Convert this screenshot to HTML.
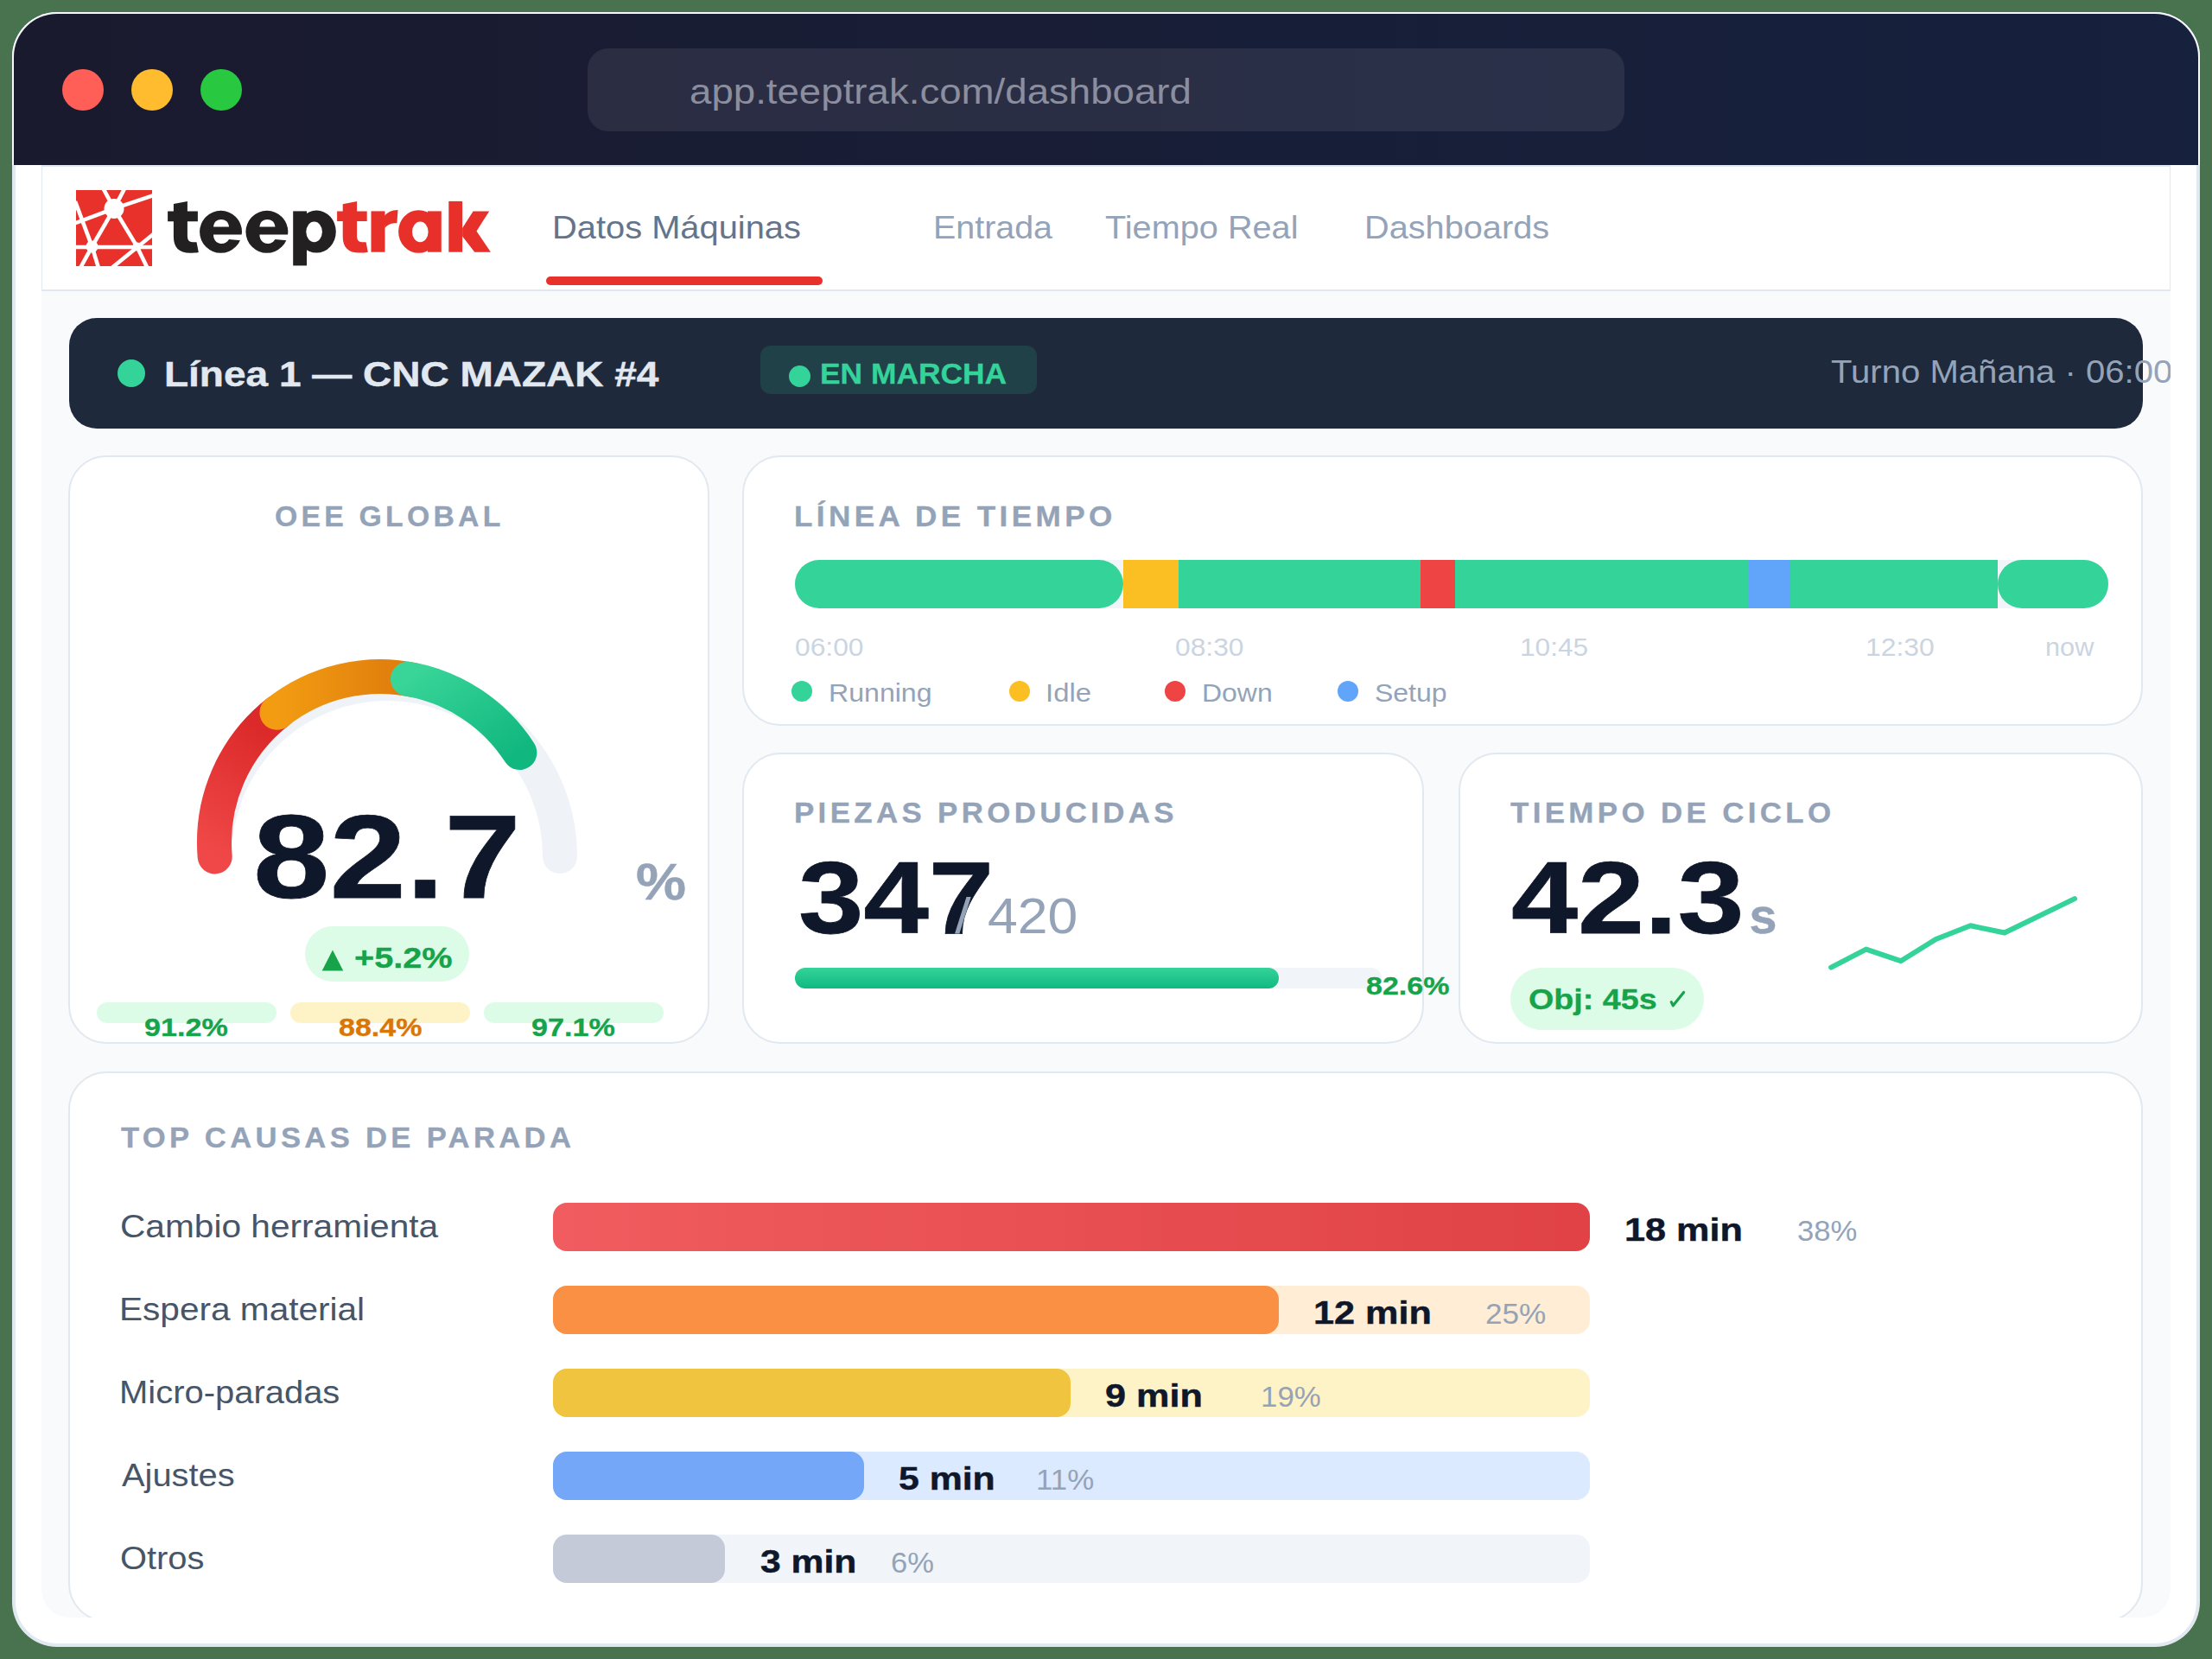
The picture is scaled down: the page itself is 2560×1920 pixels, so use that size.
<!DOCTYPE html>
<html><head><meta charset="utf-8"><style>
html,body{margin:0;padding:0;}
body{width:2560px;height:1920px;background:#48734e;position:relative;overflow:hidden;font-family:"Liberation Sans",sans-serif;}
.r{position:absolute;}
.t{position:absolute;white-space:nowrap;transform-origin:0 0;}
</style>
<script>(function(){function f(){var w=window.innerWidth||2560;var z=w/2560;if(Math.abs(z-1)>0.01){document.documentElement.style.zoom=z;}}f();window.addEventListener('resize',f);})();</script>
</head><body>
<div class="r" style="left:14px;top:14px;width:2532px;height:1892px;border-radius:52px;background:#e2e8f0;overflow:hidden">
<div class="r" style="left:0;top:0;width:2532px;height:177px;background:#f5f7fb"></div>
<div class="r" style="left:2px;top:2px;width:2528px;height:175px;border-radius:50px 50px 0 0;background:linear-gradient(90deg,#1a1a2e,#16213e)"></div>
<div class="r" style="left:4px;top:177px;width:2524px;height:1711px;border-radius:0 0 48px 48px;background:#fff"></div>
</div>
<div class="r" style="left:71.8px;top:79.6px;width:48.0px;height:48.0px;background:#ff5f57;border-radius:24px;"></div>
<div class="r" style="left:151.6px;top:79.6px;width:48.0px;height:48.0px;background:#febc2e;border-radius:24px;"></div>
<div class="r" style="left:231.5px;top:79.6px;width:48.0px;height:48.0px;background:#28c840;border-radius:24px;"></div>
<div class="r" style="left:680.0px;top:56.0px;width:1200.0px;height:96.0px;background:rgba(255,255,255,0.08);border-radius:24px;"></div>
<div class="t" style="left:798.1px;top:86.3px;font-size:41.0px;line-height:41.0px;letter-spacing:0.00px;transform:scaleX(1.1130);color:#8b8e9e;font-weight:400;">app.teeptrak.com/dashboard</div>
<div class="r" style="left:48px;top:191px;width:2464px;height:1681px;background:#f8fafc;border-radius:0 0 32px 32px;overflow:hidden">
<div id="inner" style="position:absolute;left:-48px;top:-191px;width:2560px;height:1920px">
<div class="r" style="left:48.0px;top:191.0px;width:2464.0px;height:146.0px;background:#fff;border-radius:0px;border:1px solid #e2e8f0;border-top-width:2px;border-bottom-width:2px;box-sizing:border-box"></div>
<svg class="r" style="left:88px;top:220px" width="88" height="88" viewBox="0 0 88 88">
<rect width="88" height="88" fill="#e8312a"/>
<g stroke="#fff" stroke-width="4.6" stroke-linecap="butt" fill="none">
<line x1="31.4" y1="-2" x2="44" y2="21.4"/>
<line x1="56.3" y1="-2" x2="44" y2="21.4"/>
<line x1="44" y1="21.4" x2="90" y2="6"/>
<line x1="44" y1="21.4" x2="-2" y2="38.6"/>
<line x1="-1" y1="13" x2="18.5" y2="65.4"/>
<line x1="44" y1="21.4" x2="18.5" y2="65.4"/>
<line x1="44" y1="21.4" x2="70.6" y2="65.4"/>
<line x1="-2" y1="66" x2="90" y2="66"/>
<line x1="18.5" y1="65.4" x2="5" y2="90"/>
<line x1="18.5" y1="65.4" x2="26" y2="90"/>
<line x1="42" y1="89.5" x2="90" y2="50.5"/>
<line x1="70.6" y1="65.4" x2="82.5" y2="90"/>
</g>
<circle cx="44" cy="21.4" r="11.5" fill="#fff"/>
<circle cx="18.5" cy="65.4" r="7" fill="#fff"/>
<circle cx="70.6" cy="65.4" r="5" fill="#fff"/>
</svg>
<svg class="r" style="left:0;top:0" width="600" height="330" viewBox="0 0 600 330">
<g fill="#222021">
<path d="M200.9,235.9 L216.9,233 L216.9,244.4 L228.9,244.4 L228.9,256.2 L216.9,256.2 L216.9,273 C216.9,278 219,280.2 223,280.2 L227.5,280.2 L229.8,292 C227,292.6 223.5,292.8 220,292.8 C207,292.8 200.9,286 200.9,274 L200.9,256.2 L194.1,256.2 L194.1,244.4 L200.9,244.4 Z"/>
<ellipse cx="255.55" cy="268.3" rx="24.45" ry="24.5"/>
<ellipse cx="308.9" cy="268.3" rx="24.45" ry="24.5"/>
<rect x="339.2" y="244.4" width="15.8" height="63"/>
<ellipse cx="366.3" cy="268.1" rx="22.5" ry="24.5"/>
</g>
<g fill="#fff">
<path d="M247,262.5 C247.5,257 251,253.9 256,253.9 C261,253.9 264.5,257 265,262.5 Z"/>
<path d="M247,271.6 L281.5,271.6 L281.5,278.6 L265,277 C263,280.5 260,282 256.5,282 C251,282 247,278 247,271.6 Z"/>
<path d="M300.4,262.5 C300.9,257 304.4,253.9 309.4,253.9 C314.4,253.9 317.9,257 318.4,262.5 Z"/>
<path d="M300.4,271.6 L334.9,271.6 L334.9,278.6 L318.4,277 C316.4,280.5 313.4,282 309.9,282 C304.4,282 300.4,278 300.4,271.6 Z"/>
<ellipse cx="363.6" cy="268.3" rx="9.3" ry="11.9"/>
</g>
<g fill="#e8302a">
<path d="M396.7,236.3 L413.1,232.9 L413.1,244.4 L424.7,244.4 L424.7,256.1 L413.1,256.1 L413.1,273 C413.1,278 415.2,280.2 419,280.2 L423.6,280.2 L425.8,291.8 C423,292.4 419.5,292.6 416,292.6 C403,292.6 396.7,286 396.7,274 L396.7,256.1 L390.1,256.1 L390.1,244.4 L396.7,244.4 Z"/>
<rect x="429.5" y="244.4" width="16" height="47.3"/>
<path d="M445.5,264 C448.5,259.5 453,258.3 459.4,258.3 L460.5,243.1 C453,243.1 448,246 444,251 Z"/>
<ellipse cx="484.5" cy="268" rx="23.4" ry="24.8"/>
<rect x="495" y="244.4" width="15.8" height="47.3"/>
<rect x="519.3" y="232.9" width="15.8" height="58.8"/>
<path d="M535.1,264 L547.6,244.4 L566.2,244.4 L551.5,267.4 L567.9,291.7 L549.3,291.7 L535.1,273.6 Z"/>
</g>
<ellipse cx="486.3" cy="268.4" rx="9.3" ry="11.8" fill="#fff"/>
</svg>
<div class="t" style="left:639.3px;top:244.7px;font-size:37.0px;line-height:37.0px;letter-spacing:0.00px;transform:scaleX(1.0770);color:#64748b;font-weight:400;">Datos Máquinas</div>
<div class="t" style="left:1080.1px;top:244.7px;font-size:37.0px;line-height:37.0px;letter-spacing:0.00px;transform:scaleX(1.0652);color:#94a3b8;font-weight:400;">Entrada</div>
<div class="t" style="left:1279.1px;top:244.7px;font-size:37.0px;line-height:37.0px;letter-spacing:0.00px;transform:scaleX(1.0726);color:#94a3b8;font-weight:400;">Tiempo Real</div>
<div class="t" style="left:1579.0px;top:244.7px;font-size:37.0px;line-height:37.0px;letter-spacing:0.00px;transform:scaleX(1.0730);color:#94a3b8;font-weight:400;">Dashboards</div>
<div class="r" style="left:631.6px;top:319.6px;width:320.4px;height:10.1px;background:#e8312a;border-radius:5px;"></div>
<div class="r" style="left:80.0px;top:368.0px;width:2400.0px;height:128.0px;background:#1e293b;border-radius:32px;"></div>
<div class="r" style="left:135.6px;top:416.0px;width:32.0px;height:32.0px;background:#34d399;border-radius:16px;"></div>
<div class="t" style="left:189.6px;top:413.3px;font-size:41.0px;line-height:41.0px;letter-spacing:0.00px;transform:scaleX(1.1217);color:#e2e8f0;font-weight:700;-webkit-text-stroke:0.45px #e2e8f0;">Línea 1 — CNC MAZAK #4</div>
<div class="r" style="left:880.0px;top:400.0px;width:320.0px;height:56.0px;background:rgba(52,211,153,0.15);border-radius:12px;"></div>
<div class="r" style="left:912.5px;top:423.2px;width:25.0px;height:25.0px;background:#34d399;border-radius:12.5px;"></div>
<div class="t" style="left:948.6px;top:416.4px;font-size:33.0px;line-height:33.0px;letter-spacing:0.00px;transform:scaleX(1.0718);color:#34d399;font-weight:700;-webkit-text-stroke:0.30px #34d399;">EN MARCHA</div>
<div class="t" style="left:2119.2px;top:412.2px;font-size:37.0px;line-height:37.0px;letter-spacing:0.00px;transform:scaleX(1.0838);color:#94a3b8;font-weight:400;">Turno Mañana · 06:00</div>
<div class="r" style="left:79.0px;top:527.0px;width:742.0px;height:681.0px;background:#fff;border-radius:44px;border:2px solid #e2e8f0;box-sizing:border-box"></div>
<div class="r" style="left:859.0px;top:527.0px;width:1621.0px;height:313.0px;background:#fff;border-radius:44px;border:2px solid #e2e8f0;box-sizing:border-box"></div>
<div class="r" style="left:859.0px;top:871.0px;width:789.0px;height:337.0px;background:#fff;border-radius:44px;border:2px solid #e2e8f0;box-sizing:border-box"></div>
<div class="r" style="left:1688.0px;top:871.0px;width:792.0px;height:337.0px;background:#fff;border-radius:44px;border:2px solid #e2e8f0;box-sizing:border-box"></div>
<div class="r" style="left:79.0px;top:1240.0px;width:2401.0px;height:637.0px;background:#fff;border-radius:44px;border:2px solid #e2e8f0;box-sizing:border-box"></div>
<div class="t" style="left:317.7px;top:580.6px;font-size:33.0px;line-height:33.0px;letter-spacing:4.12px;transform:scaleX(1.0237);color:#94a3b8;font-weight:700;-webkit-text-stroke:0.30px #94a3b8;">OEE GLOBAL</div>
<div class="t" style="left:918.6px;top:581.1px;font-size:33.0px;line-height:33.0px;letter-spacing:4.12px;transform:scaleX(1.0640);color:#94a3b8;font-weight:700;-webkit-text-stroke:0.30px #94a3b8;">LÍNEA DE TIEMPO</div>
<div class="t" style="left:918.9px;top:924.0px;font-size:33.0px;line-height:33.0px;letter-spacing:4.12px;transform:scaleX(1.0564);color:#94a3b8;font-weight:700;-webkit-text-stroke:0.30px #94a3b8;">PIEZAS PRODUCIDAS</div>
<div class="t" style="left:1747.7px;top:924.0px;font-size:33.0px;line-height:33.0px;letter-spacing:4.12px;transform:scaleX(1.0573);color:#94a3b8;font-weight:700;-webkit-text-stroke:0.30px #94a3b8;">TIEMPO DE CICLO</div>
<div class="t" style="left:140.2px;top:1300.3px;font-size:33.0px;line-height:33.0px;letter-spacing:4.12px;transform:scaleX(1.0496);color:#94a3b8;font-weight:700;-webkit-text-stroke:0.30px #94a3b8;">TOP CAUSAS DE PARADA</div>
<svg class="r" style="left:0;top:0" width="2560" height="1920" viewBox="0 0 2560 1920">
<defs><linearGradient id="gr" x1="0" y1="1" x2="0.3" y2="0"><stop offset="0" stop-color="#f04848"/><stop offset="1" stop-color="#dc2a2a"/></linearGradient><linearGradient id="go" x1="0" y1="0" x2="1" y2="0"><stop offset="0" stop-color="#f39c12"/><stop offset="1" stop-color="#dd7a0c"/></linearGradient><linearGradient id="gg" x1="0" y1="0" x2="1" y2="1"><stop offset="0" stop-color="#38d498"/><stop offset="1" stop-color="#10b77f"/></linearGradient></defs>
<path d="M248.00,991.00 A200,200 0 0 1 648.00,991.00" stroke="#eff3f8" stroke-width="40" fill="none" stroke-linecap="round"/>
<path d="M248.70,991.40 A192,192 0 0 1 321.79,823.70" stroke="url(#gr)" stroke-width="40" fill="none" stroke-linecap="round"/>
<path d="M320.48,824.74 A192,192 0 0 1 479.92,787.20" stroke="url(#go)" stroke-width="40" fill="none" stroke-linecap="round"/>
<path d="M472.02,785.69 A192,192 0 0 1 601.39,870.99" stroke="url(#gg)" stroke-width="40" fill="none" stroke-linecap="round"/>
<polyline points="2119.2,1119.7 2159.7,1098.6 2199.8,1112.2 2240.4,1087 2280.5,1071.3 2319.9,1079.5 2401,1040.1" stroke="#34d399" stroke-width="6" fill="none" stroke-linecap="round" stroke-linejoin="round"/>
</svg>
<div class="t" style="left:293.3px;top:924.0px;font-size:136.5px;line-height:136.5px;letter-spacing:0.00px;transform:scaleX(1.1663);color:#0f172a;font-weight:700;-webkit-text-stroke:0.75px #0f172a;">82.7</div>
<div class="t" style="left:736.1px;top:990.9px;font-size:59.5px;line-height:59.5px;letter-spacing:0.00px;transform:scaleX(1.0955);color:#94a3b8;font-weight:700;-webkit-text-stroke:0.45px #94a3b8;">%</div>
<div class="r" style="left:352.7px;top:1071.7px;width:190.7px;height:64.6px;background:#dcfce7;border-radius:32px;"></div>
<svg class="r" style="left:0;top:0" width="2560" height="1920"><polygon points="372.7,1123.6 397.2,1123.6 384.95,1099.5" fill="#16a34a"/></svg>
<div class="t" style="left:409.7px;top:1092.3px;font-size:33.0px;line-height:33.0px;letter-spacing:0.00px;transform:scaleX(1.2027);color:#16a34a;font-weight:700;-webkit-text-stroke:0.30px #16a34a;">+5.2%</div>
<div class="r" style="left:112.0px;top:1160.0px;width:208.0px;height:24.0px;background:#dcfce7;border-radius:12px;"></div>
<div class="t" style="left:167.4px;top:1175.2px;font-size:29.0px;line-height:29.0px;letter-spacing:0.00px;transform:scaleX(1.1770);color:#16a34a;font-weight:700;-webkit-text-stroke:0.30px #16a34a;">91.2%</div>
<div class="r" style="left:336.0px;top:1160.0px;width:208.0px;height:24.0px;background:#fef3c7;border-radius:12px;"></div>
<div class="t" style="left:391.6px;top:1175.2px;font-size:29.0px;line-height:29.0px;letter-spacing:0.00px;transform:scaleX(1.1739);color:#d97706;font-weight:700;-webkit-text-stroke:0.30px #d97706;">88.4%</div>
<div class="r" style="left:560.0px;top:1160.0px;width:208.0px;height:24.0px;background:#dcfce7;border-radius:12px;"></div>
<div class="t" style="left:615.4px;top:1175.2px;font-size:29.0px;line-height:29.0px;letter-spacing:0.00px;transform:scaleX(1.1770);color:#16a34a;font-weight:700;-webkit-text-stroke:0.30px #16a34a;">97.1%</div>
<div class="r" style="left:920.0px;top:648.0px;width:1520.0px;height:56.0px;background:#f1f5f9;border-radius:28px;"></div>
<div class="r" style="left:920.0px;top:648.0px;width:379.6px;height:56.0px;background:#34d399;border-radius:28px;"></div>
<div class="r" style="left:1299.6px;top:648.0px;width:64.5px;height:56.0px;background:#fbbf24;border-radius:0px;"></div>
<div class="r" style="left:1364.1px;top:648.0px;width:280.2px;height:56.0px;background:#34d399;border-radius:0px;"></div>
<div class="r" style="left:1644.3px;top:648.0px;width:39.5px;height:56.0px;background:#ef4444;border-radius:0px;"></div>
<div class="r" style="left:1683.8px;top:648.0px;width:340.1px;height:56.0px;background:#34d399;border-radius:0px;"></div>
<div class="r" style="left:2023.9px;top:648.0px;width:48.0px;height:56.0px;background:#60a5fa;border-radius:0px;"></div>
<div class="r" style="left:2071.9px;top:648.0px;width:239.8px;height:56.0px;background:#34d399;border-radius:0px;"></div>
<div class="r" style="left:2311.7px;top:648.0px;width:128.0px;height:56.0px;background:#34d399;border-radius:28px;"></div>
<div class="t" style="left:919.9px;top:735.2px;font-size:29.0px;line-height:29.0px;letter-spacing:0.00px;transform:scaleX(1.0957);color:#cbd5e1;font-weight:400;">06:00</div>
<div class="t" style="left:1359.9px;top:735.2px;font-size:29.0px;line-height:29.0px;letter-spacing:0.00px;transform:scaleX(1.0957);color:#cbd5e1;font-weight:400;">08:30</div>
<div class="t" style="left:1758.9px;top:735.2px;font-size:29.0px;line-height:29.0px;letter-spacing:0.00px;transform:scaleX(1.0903);color:#cbd5e1;font-weight:400;">10:45</div>
<div class="t" style="left:2158.5px;top:735.2px;font-size:29.0px;line-height:29.0px;letter-spacing:0.00px;transform:scaleX(1.0975);color:#cbd5e1;font-weight:400;">12:30</div>
<div class="t" style="left:2366.5px;top:735.2px;font-size:29.0px;line-height:29.0px;letter-spacing:0.00px;transform:scaleX(1.0585);color:#cbd5e1;font-weight:400;">now</div>
<div class="r" style="left:916.0px;top:788.0px;width:24.0px;height:24.0px;background:#34d399;border-radius:12px;"></div>
<div class="t" style="left:958.7px;top:786.8px;font-size:30.0px;line-height:30.0px;letter-spacing:0.00px;transform:scaleX(1.0699);color:#94a3b8;font-weight:400;">Running</div>
<div class="r" style="left:1167.7px;top:788.0px;width:24.0px;height:24.0px;background:#fbbf24;border-radius:12px;"></div>
<div class="t" style="left:1210.0px;top:786.8px;font-size:30.0px;line-height:30.0px;letter-spacing:0.00px;transform:scaleX(1.0960);color:#94a3b8;font-weight:400;">Idle</div>
<div class="r" style="left:1347.9px;top:788.0px;width:24.0px;height:24.0px;background:#ef4444;border-radius:12px;"></div>
<div class="t" style="left:1391.0px;top:786.8px;font-size:30.0px;line-height:30.0px;letter-spacing:0.00px;transform:scaleX(1.0657);color:#94a3b8;font-weight:400;">Down</div>
<div class="r" style="left:1548.0px;top:788.0px;width:24.0px;height:24.0px;background:#60a5fa;border-radius:12px;"></div>
<div class="t" style="left:1590.8px;top:786.8px;font-size:30.0px;line-height:30.0px;letter-spacing:0.00px;transform:scaleX(1.0660);color:#94a3b8;font-weight:400;">Setup</div>
<div class="t" style="left:923.5px;top:978.8px;font-size:119.5px;line-height:119.5px;letter-spacing:0.00px;transform:scaleX(1.1345);color:#0f172a;font-weight:700;-webkit-text-stroke:0.75px #0f172a;">347</div>
<div class="t" style="left:1104.6px;top:1031.8px;font-size:57.5px;line-height:57.5px;letter-spacing:0.00px;transform:scaleX(1.1719);color:#94a3b8;font-weight:400;">/</div>
<div class="t" style="left:1142.5px;top:1031.8px;font-size:57.5px;line-height:57.5px;letter-spacing:0.00px;transform:scaleX(1.0865);color:#94a3b8;font-weight:400;">420</div>
<div class="r" style="left:920.0px;top:1120.0px;width:679.3px;height:24.0px;background:#f1f5f9;border-radius:12px;"></div>
<div class="r" style="left:920.0px;top:1120.0px;width:559.6px;height:24.0px;background:linear-gradient(180deg,#34d399,#10b981);border-radius:12px;"></div>
<div class="t" style="left:1580.5px;top:1127.0px;font-size:29.0px;line-height:29.0px;letter-spacing:0.00px;transform:scaleX(1.1739);color:#16a34a;font-weight:700;-webkit-text-stroke:0.30px #16a34a;">82.6%</div>
<div class="t" style="left:1748.7px;top:978.8px;font-size:119.5px;line-height:119.5px;letter-spacing:0.00px;transform:scaleX(1.1589);color:#0f172a;font-weight:700;-webkit-text-stroke:0.75px #0f172a;">42.3</div>
<div class="t" style="left:2024.5px;top:1032.3px;font-size:57.5px;line-height:57.5px;letter-spacing:0.00px;transform:scaleX(1.0000);color:#94a3b8;font-weight:700;-webkit-text-stroke:0.45px #94a3b8;">s</div>
<div class="r" style="left:1748.0px;top:1120.0px;width:224.0px;height:72.0px;background:#dcfce7;border-radius:36px;"></div>
<div class="t" style="left:1769.2px;top:1139.8px;font-size:33.0px;line-height:33.0px;letter-spacing:0.00px;transform:scaleX(1.1412);color:#16a34a;font-weight:700;-webkit-text-stroke:0.30px #16a34a;">Obj: 45s</div>
<svg class="r" style="left:0;top:0" width="2560" height="1920"><path d="M1934.2,1159.6 L1936.3,1163.8 L1948.6,1148.4" stroke="#16a34a" stroke-width="3.2" fill="none" stroke-linecap="round" stroke-linejoin="round"/></svg>
<div class="t" style="left:139.0px;top:1401.4px;font-size:37.0px;line-height:37.0px;letter-spacing:0.00px;transform:scaleX(1.0982);color:#475569;font-weight:400;">Cambio herramienta</div>
<div class="r" style="left:640.0px;top:1392.0px;width:1200.0px;height:56.0px;background:linear-gradient(90deg,#f05c5f,#e04245);border-radius:16px;"></div>
<div class="t" style="left:1880.2px;top:1404.9px;font-size:37.0px;line-height:37.0px;letter-spacing:0.00px;transform:scaleX(1.1667);color:#0f172a;font-weight:700;-webkit-text-stroke:0.45px #0f172a;">18 min</div>
<div class="t" style="left:2080.4px;top:1408.3px;font-size:33.0px;line-height:33.0px;letter-spacing:0.00px;transform:scaleX(1.0510);color:#94a3b8;font-weight:400;">38%</div>
<div class="t" style="left:137.6px;top:1497.4px;font-size:37.0px;line-height:37.0px;letter-spacing:0.00px;transform:scaleX(1.0966);color:#475569;font-weight:400;">Espera material</div>
<div class="r" style="left:640.0px;top:1488.0px;width:1200.0px;height:56.0px;background:#ffedd5;border-radius:16px;"></div>
<div class="r" style="left:640.0px;top:1488.0px;width:839.6px;height:56.0px;background:#fa9044;border-radius:16px;"></div>
<div class="t" style="left:1520.4px;top:1500.9px;font-size:37.0px;line-height:37.0px;letter-spacing:0.00px;transform:scaleX(1.1667);color:#0f172a;font-weight:700;-webkit-text-stroke:0.45px #0f172a;">12 min</div>
<div class="t" style="left:1719.3px;top:1504.3px;font-size:33.0px;line-height:33.0px;letter-spacing:0.00px;transform:scaleX(1.0632);color:#94a3b8;font-weight:400;">25%</div>
<div class="t" style="left:137.7px;top:1593.4px;font-size:37.0px;line-height:37.0px;letter-spacing:0.00px;transform:scaleX(1.0797);color:#475569;font-weight:400;">Micro-paradas</div>
<div class="r" style="left:640.0px;top:1584.0px;width:1200.0px;height:56.0px;background:#fef3c7;border-radius:16px;"></div>
<div class="r" style="left:640.0px;top:1584.0px;width:599.4px;height:56.0px;background:#f0c43f;border-radius:16px;"></div>
<div class="t" style="left:1278.9px;top:1596.9px;font-size:37.0px;line-height:37.0px;letter-spacing:0.00px;transform:scaleX(1.1667);color:#0f172a;font-weight:700;-webkit-text-stroke:0.45px #0f172a;">9 min</div>
<div class="t" style="left:1458.9px;top:1600.3px;font-size:33.0px;line-height:33.0px;letter-spacing:0.00px;transform:scaleX(1.0560);color:#94a3b8;font-weight:400;">19%</div>
<div class="t" style="left:140.9px;top:1689.4px;font-size:37.0px;line-height:37.0px;letter-spacing:0.00px;transform:scaleX(1.0771);color:#475569;font-weight:400;">Ajustes</div>
<div class="r" style="left:640.0px;top:1680.0px;width:1200.0px;height:56.0px;background:#dbeafe;border-radius:16px;"></div>
<div class="r" style="left:640.0px;top:1680.0px;width:359.5px;height:56.0px;background:#74a7f7;border-radius:16px;"></div>
<div class="t" style="left:1039.8px;top:1692.9px;font-size:37.0px;line-height:37.0px;letter-spacing:0.00px;transform:scaleX(1.1559);color:#0f172a;font-weight:700;-webkit-text-stroke:0.45px #0f172a;">5 min</div>
<div class="t" style="left:1198.7px;top:1696.3px;font-size:33.0px;line-height:33.0px;letter-spacing:0.00px;transform:scaleX(1.0560);color:#94a3b8;font-weight:400;">11%</div>
<div class="t" style="left:139.0px;top:1785.4px;font-size:37.0px;line-height:37.0px;letter-spacing:0.00px;transform:scaleX(1.0771);color:#475569;font-weight:400;">Otros</div>
<div class="r" style="left:640.0px;top:1776.0px;width:1200.0px;height:56.0px;background:#f1f5f9;border-radius:16px;"></div>
<div class="r" style="left:640.0px;top:1776.0px;width:199.4px;height:56.0px;background:#c5cad8;border-radius:16px;"></div>
<div class="t" style="left:880.3px;top:1788.9px;font-size:37.0px;line-height:37.0px;letter-spacing:0.00px;transform:scaleX(1.1524);color:#0f172a;font-weight:700;-webkit-text-stroke:0.45px #0f172a;">3 min</div>
<div class="t" style="left:1031.2px;top:1792.3px;font-size:33.0px;line-height:33.0px;letter-spacing:0.00px;transform:scaleX(1.0447);color:#94a3b8;font-weight:400;">6%</div>
</div>
</div>
</body></html>
